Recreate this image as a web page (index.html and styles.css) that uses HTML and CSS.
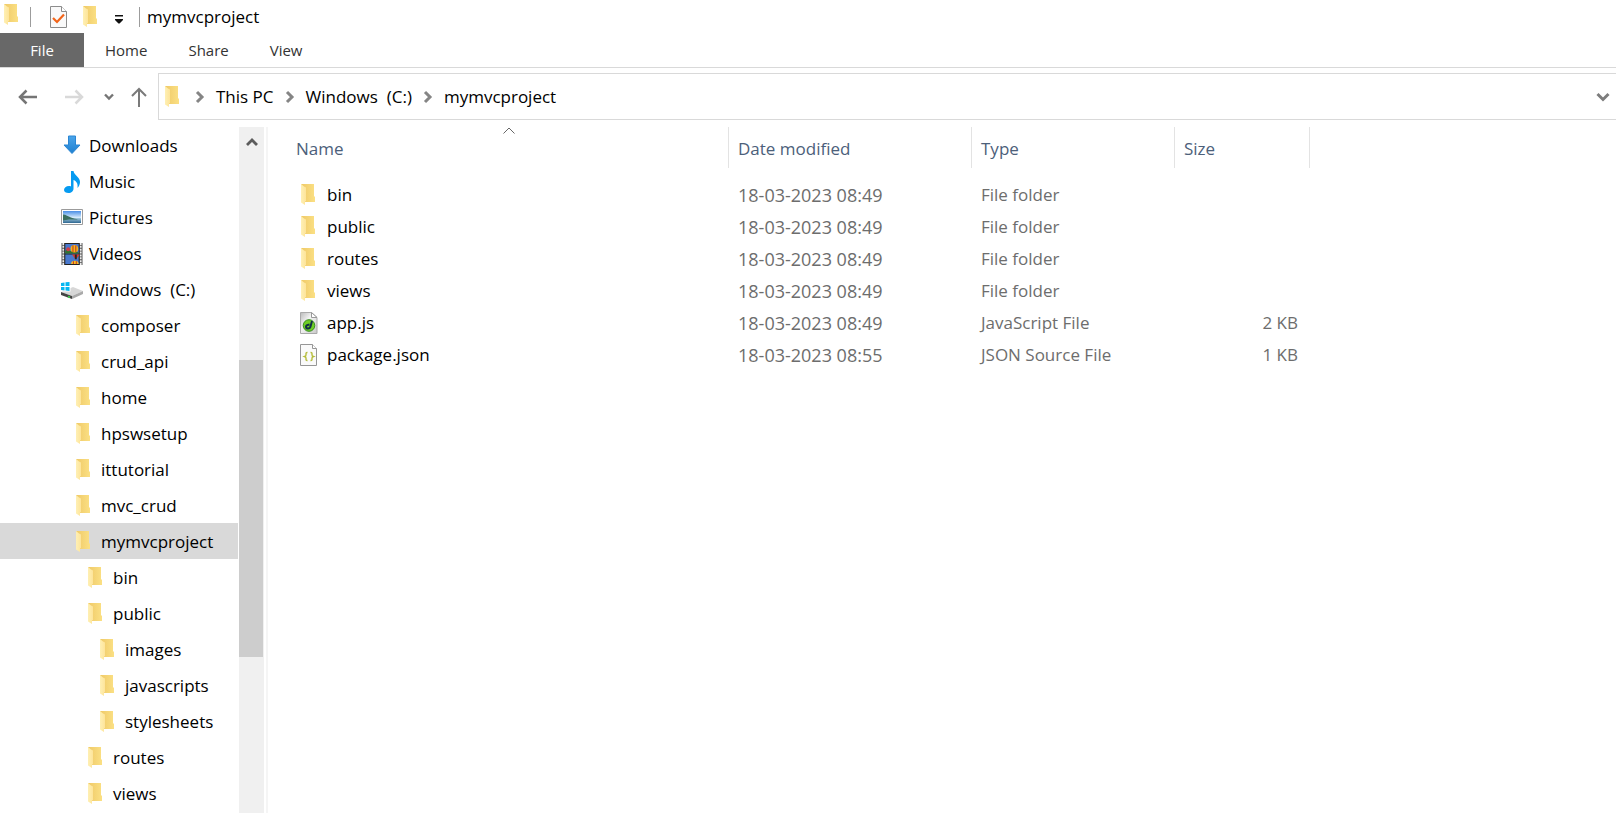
FILE: index.html
```html
<!DOCTYPE html>
<html lang="en">
<head>
<meta charset="utf-8">
<title>mymvcproject</title>
<link rel="stylesheet" href="styles.css">
</head>
<body>
<svg class="defs" aria-hidden="true">
  <defs>
    <linearGradient id="gold" x1="0" x2="1"><stop offset="0" stop-color="#efc967"/><stop offset="1" stop-color="#fbe084"/></linearGradient>
    <linearGradient id="flap" x1="0" x2="1"><stop offset="0" stop-color="#fff0b4"/><stop offset="1" stop-color="#fde49a"/></linearGradient>
    <linearGradient id="blue" x1="0" y1="0" x2="0" y2="1"><stop offset="0" stop-color="#4ba5ea"/><stop offset="1" stop-color="#1f80d0"/></linearGradient>
    <linearGradient id="sky" x1="0" y1="0" x2="0" y2="1"><stop offset="0" stop-color="#4a8fe6"/><stop offset="1" stop-color="#dff1fc"/></linearGradient>
    <linearGradient id="sea" x1="0" y1="0" x2="0" y2="1"><stop offset="0" stop-color="#a5cbe0"/><stop offset="1" stop-color="#2d6690"/></linearGradient>
    <linearGradient id="paper" x1="0" y1="0" x2="1" y2="1"><stop offset="0" stop-color="#b9b9b9"/><stop offset="0.4" stop-color="#f4f4f4"/><stop offset="1" stop-color="#c9c9c9"/></linearGradient>
  </defs>
  <symbol id="folder" viewBox="0 0 22 22"><path d="M3 0h13v12l1 1v5H7z" fill="url(#gold)"/><path d="M3 0 6 2.500l2 1V17l-1 .5V21L3 18.500z" fill="url(#flap)"/></symbol>
  <symbol id="right" viewBox="0 0 10 14"><path d="m2 2 5 5-5 5" fill="none" stroke="#858585" stroke-width="3"/></symbol>
</svg>

<header class="titlebar">
  <svg class="icon"><use href="#folder"/></svg>
  <span class="divider"></span>
  <button class="tool" aria-label="Properties"><svg class="icon" viewBox="0 0 22 22"><path d="M3.500.5h11l5 5v16h-16z" fill="#f9f9f9" stroke="#8c8c8c"/><path d="M14.500.5v5h5" fill="#fff" stroke="#8c8c8c"/><path d="m6 12 4 4 7-7.500" fill="none" stroke="#f26419" stroke-width="2.200"/></svg></button>
  <button class="tool" aria-label="New folder"><svg class="icon"><use href="#folder"/></svg></button>
  <button class="tool" aria-label="Customize toolbar"><svg class="customize" viewBox="0 0 10 10"><path d="M1 1h8v1.500H1zM1 5h8v1L5.500 9.500h-1L1 6z" fill="#111"/></svg></button>
  <span class="divider"></span>
  <h1 class="title">mymvcproject</h1>
</header>

<nav class="tabs">
  <button class="tab tab-file">File</button>
  <button class="tab">Home</button>
  <button class="tab">Share</button>
  <button class="tab">View</button>
</nav>

<div class="navbar">
  <div class="nav-buttons">
    <button class="tool" aria-label="Back"><svg class="arrow" viewBox="0 0 20 20"><path d="M19 10H2M8.500 3.500 2 10l6.500 6.500" fill="none" stroke="#757575" stroke-width="2.500"/></svg></button>
    <button class="tool" aria-label="Forward"><svg class="arrow" viewBox="0 0 20 20"><path d="M1 10h17M11.500 3.500 18 10l-6.500 6.500" fill="none" stroke="#d9d9d9" stroke-width="2.500"/></svg></button>
    <button class="tool" aria-label="Recent locations"><svg class="recent" viewBox="0 0 10 10"><path d="m1 2.500 4 4 4-4" fill="none" stroke="#757575" stroke-width="2.400"/></svg></button>
    <button class="tool" aria-label="Up"><svg class="arrow" viewBox="0 0 20 20"><path d="M10 20V2M3 9l7-7 7 7" fill="none" stroke="#7a7a7a" stroke-width="2"/></svg></button>
  </div>
  <div class="address">
    <svg class="icon"><use href="#folder"/></svg>
    <svg class="crumb-arrow"><use href="#right"/></svg>
    <a class="crumb" href="#">This PC</a>
    <svg class="crumb-arrow"><use href="#right"/></svg>
    <a class="crumb" href="#">Windows&nbsp; (C:)</a>
    <svg class="crumb-arrow"><use href="#right"/></svg>
    <a class="crumb" href="#">mymvcproject</a>
    <button class="tool history" aria-label="Previous locations"><svg class="history-icon" viewBox="0 0 14 14"><path d="m1.500 4 5.500 5.500L12.500 4" fill="none" stroke="#7d7d7d" stroke-width="3"/></svg></button>
  </div>
</div>

<div class="content">
  <nav class="tree">
    <a class="node" href="#"><svg class="icon" viewBox="0 0 22 22"><path d="M7.500 1h7v9h4.500L11 18.500 3 10h4.500z" fill="url(#blue)" stroke="#2b86d3"/></svg>Downloads</a>
    <a class="node" href="#"><svg class="icon" viewBox="0 0 22 22"><path d="M10 0h2.500c.5 4 6.500 6 6.500 11 0 2-1 4.500-2.500 6 .5-4-.5-6.500-4-8v8.500c0 2.500-2 4.500-5 4.500-2.500 0-4.500-1-4.500-3s2-4 5-4c1 0 1.500 0 2 .5z" fill="#069bf1"/></svg>Music</a>
    <a class="node" href="#"><svg class="icon" viewBox="0 0 22 22"><path d="M.5 2.500h21v15H.5z" fill="#fff" stroke="#9b9b9b"/><path d="M2 4h18v7H2z" fill="url(#sky)"/><path d="M2 11h18v5H2z" fill="url(#sea)"/><path d="M2 7.500c3 0 5 2 8 3s5 1.500 7 2H8l-6 1z" fill="#3b6f60"/></svg>Pictures</a>
    <a class="node" href="#"><svg class="icon" viewBox="0 0 22 23"><path d="M0 0h22v23H0z" fill="#565656"/><path d="M2 0v23M20 0v23" stroke="#eee" stroke-width="2" stroke-dasharray="2 1"/><path d="M3 0h16v23H3z" fill="#222"/><path d="M4 1h14v10H4zM4 12h14v10H4z" fill="#4979ce"/><path d="M4 8c3-2 4 0 7 1s5 0 7 1v1H4z" fill="#32742d"/><circle cx="13.500" cy="6" r="4" fill="#f4b51e"/><path d="M12 2.500v7M15 2.500v7" stroke="#b82d23"/><circle cx="7" cy="6.500" r="2" fill="#d33b45"/><path d="M11 12h8l-3 4h-2z" fill="#d63a2a"/><path d="M14 12h2v5h-2z" fill="#252525"/><path d="M10 22a4 3.500 0 0 1 8 0z" fill="#f5bd21"/><path d="M12.500 19v3M15.500 19v3" stroke="#c72e22"/></svg>Videos</a>
    <a class="node" href="#"><svg class="icon" viewBox="0 0 22 22"><path d="m0 13 12-5 10 4-11 5z" fill="#d7d7d7"/><path d="m0 13 11 4v3L0 16z" fill="#444"/><path d="m11 17 11-5v3l-11 5z" fill="#aaa"/><path d="M7 17.500l2 .8" stroke="#37d848" stroke-width="1.500"/><path d="M-.5 2.500h10v10h-10z" fill="#fff"/><path d="M0 4l3.500-.5V7H0zM4.500 3.300 8.500 3v4h-4zM0 8h3.500v3.500L0 11zM4.500 8h4v4l-4-.5z" fill="#06b7f1"/></svg>Windows&nbsp; (C:)</a>
    <a class="node level-1" href="#"><svg class="icon"><use href="#folder"/></svg>composer</a>
    <a class="node level-1" href="#"><svg class="icon"><use href="#folder"/></svg>crud_api</a>
    <a class="node level-1" href="#"><svg class="icon"><use href="#folder"/></svg>home</a>
    <a class="node level-1" href="#"><svg class="icon"><use href="#folder"/></svg>hpswsetup</a>
    <a class="node level-1" href="#"><svg class="icon"><use href="#folder"/></svg>ittutorial</a>
    <a class="node level-1" href="#"><svg class="icon"><use href="#folder"/></svg>mvc_crud</a>
    <a class="node level-1 selected" href="#" aria-current="true"><svg class="icon"><use href="#folder"/></svg>mymvcproject</a>
    <a class="node level-2" href="#"><svg class="icon"><use href="#folder"/></svg>bin</a>
    <a class="node level-2" href="#"><svg class="icon"><use href="#folder"/></svg>public</a>
    <a class="node level-3" href="#"><svg class="icon"><use href="#folder"/></svg>images</a>
    <a class="node level-3" href="#"><svg class="icon"><use href="#folder"/></svg>javascripts</a>
    <a class="node level-3" href="#"><svg class="icon"><use href="#folder"/></svg>stylesheets</a>
    <a class="node level-2" href="#"><svg class="icon"><use href="#folder"/></svg>routes</a>
    <a class="node level-2" href="#"><svg class="icon"><use href="#folder"/></svg>views</a>
  </nav>
  <div class="scrollbar">
    <button class="tool scroll-up" aria-label="Scroll up"><svg class="scroll-icon" viewBox="0 0 12 12"><path d="m1 9 5-5 5 5" fill="none" stroke="#5c5c5c" stroke-width="2.800"/></svg></button>
    <div class="track-before"></div>
    <div class="thumb"></div>
    <div class="track-after"></div>
  </div>
  <main class="files">
    <table class="list">
      <colgroup><col class="col-name"><col class="col-date"><col class="col-type"><col class="col-size"></colgroup>
      <thead>
        <tr>
          <th class="name">Name<svg class="sort" viewBox="0 0 12 7"><path d="m.5 6.500 5.500-5.500 5.500 5.500" fill="none" stroke="#666"/></svg></th>
          <th>Date modified</th><th>Type</th><th>Size</th>
        </tr>
      </thead>
      <tbody>
        <tr><td class="name"><span class="file"><svg class="icon"><use href="#folder"/></svg>bin</span></td><td class="date">18-03-2023 08:49</td><td>File folder</td><td class="size"></td></tr>
        <tr><td class="name"><span class="file"><svg class="icon"><use href="#folder"/></svg>public</span></td><td class="date">18-03-2023 08:49</td><td>File folder</td><td class="size"></td></tr>
        <tr><td class="name"><span class="file"><svg class="icon"><use href="#folder"/></svg>routes</span></td><td class="date">18-03-2023 08:49</td><td>File folder</td><td class="size"></td></tr>
        <tr><td class="name"><span class="file"><svg class="icon"><use href="#folder"/></svg>views</span></td><td class="date">18-03-2023 08:49</td><td>File folder</td><td class="size"></td></tr>
        <tr><td class="name"><span class="file"><svg class="icon" viewBox="0 0 22 22"><path d="M2.500.5h11l5.500 5v16H2.500z" fill="url(#paper)" stroke="#aaa"/><path d="M13.500.5v5H19z" fill="#fff" stroke="#999"/><circle cx="11" cy="13.500" r="5.800" fill="#6fce25" stroke="#348c1b"/><path d="m14 9-1.500 5.500q-.5 2-2.500 2t-2-1.800 3.500-2.200" fill="none" stroke="#123047" stroke-width="2"/></svg>app.js</span></td><td class="date">18-03-2023 08:49</td><td>JavaScript File</td><td class="size">2 KB</td></tr>
        <tr><td class="name"><span class="file"><svg class="icon" viewBox="0 0 22 22"><path d="M2.500.5h12l4 4v17h-16z" fill="#fafafa" stroke="#969696"/><path d="M14.500.5v4h4" fill="#fff" stroke="#969696"/><path d="M9.500 8.500H9q-1 0-1 1V11q0 1-1.500 1.500Q8 13 8 14v1.500q0 1 1 1h.5M12.500 8.500h.5q1 0 1 1V11q0 1 1.500 1.500Q14 13 14 14v1.500q0 1-1 1h-.5" fill="none" stroke="#b6bd3c" stroke-width="1.400"/></svg>package.json</span></td><td class="date">18-03-2023 08:55</td><td>JSON Source File</td><td class="size">1 KB</td></tr>
      </tbody>
    </table>
  </main>
</div>
</body>
</html>
```
FILE: styles.css
```css
* { box-sizing: border-box; }
body {
  margin: 0;
  min-height: 100vh;
  display: flex;
  flex-direction: column;
  background: #fff;
  color: #000;
  font: 17px/24px "Open Sans", "Noto Sans", sans-serif;
}
a { color: inherit; text-decoration: none; }
svg { display: block; flex: none; }
.defs { position: absolute; width: 0; height: 0; }
.icon { width: 22px; height: 22px; }
.tool {
  display: flex;
  align-items: center;
  justify-content: center;
  padding: 0;
  border: 0;
  background: none;
}

.titlebar { display: flex; align-items: center; height: 33px; padding: 1px 0 0 1px; }
.titlebar > .icon { margin-bottom: 4px; }
.titlebar .divider { width: 1px; height: 20px; background: #9c9c9c; }
.titlebar > .icon + .divider { margin: 0 16px 0 7px; }
.titlebar .tool + .tool { margin-left: 11px; }
.titlebar .tool + .tool:has(.customize) { margin-left: 10px; }
.titlebar .customize { width: 10px; height: 10px; margin: 4px 15px 0 2px; }
.title { margin: 0 0 0 7px; font-size: 17px; font-weight: 400; }

.tabs { display: flex; gap: 1px; height: 35px; border-bottom: 1px solid #d9d9d9; }
.tab {
  padding: 0 20px;
  border: 0;
  background: none;
  color: #333;
  font: 15px/24px "Open Sans", "Noto Sans", sans-serif;
}
.tab-file { width: 84px; background: #686868; color: #fff; }

.navbar { display: flex; height: 59px; padding-top: 5px; }
.nav-buttons { display: flex; align-items: center; width: 158px; height: 47px; padding-left: 18px; }
.arrow { width: 20px; height: 20px; }
.nav-buttons .tool:nth-child(2) { margin-left: 26px; }
.recent { width: 10px; height: 10px; margin: 0 15px 0 20px; }
.address {
  flex: 1;
  display: flex;
  align-items: center;
  height: 47px;
  padding-left: 3px;
  border: 1px solid #d9d9d9;
  border-right: 0;
}
.crumb-arrow { width: 10px; height: 14px; margin: 0 11px; }
.history { margin-left: auto; padding-right: 6px; }
.history-icon { width: 14px; height: 14px; }

.content { flex: 1; display: flex; }
.tree { width: 238px; flex: none; }
.node { display: flex; align-items: center; gap: 6px; height: 36px; padding: 2px 0 0 61px; white-space: nowrap; }
.level-1 { padding-left: 73px; }
.level-2 { padding-left: 85px; }
.level-3 { padding-left: 97px; }
.selected { background: #d9d9d9; }

.scrollbar { display: flex; flex-direction: column; flex: none; width: 25px; margin-left: 1px; background: #f0f0f0; }
.scroll-up { height: 30px; }
.scroll-icon { width: 12px; height: 12px; }
.track-before { flex: 203; }
.thumb { flex: 297; margin-right: 1px; background: #cdcdcd; }
.track-after { flex: 156; }

.files { flex: 1; margin-left: 2px; border-left: 2px solid #f5f5f5; }
.list { width: 1042px; table-layout: fixed; border-spacing: 0; }
.col-name { width: 461px; }
.col-date { width: 243px; }
.col-type { width: 203px; }
.col-size { width: 135px; }
.list th {
  position: relative;
  height: 41px;
  padding: 2px 0 0 9px;
  border-right: 1px solid #e3e3e3;
  color: #4c607a;
  font-weight: 400;
  text-align: left;
}
.list th.name { padding-left: 28px; }
.sort { position: absolute; top: 0; left: 51%; width: 12px; height: 7px; }
.list tbody::before { content: ""; display: block; height: 10px; }
.list td { height: 32px; padding: 2px 0 0 9px; color: #6d6d6d; }
.list td.name { padding-left: 30px; color: #000; }
.list td.date { font-size: 18px; }
.list td.size { padding: 2px 12px 0 0; text-align: right; }
.file { display: flex; align-items: center; gap: 7px; }
```
